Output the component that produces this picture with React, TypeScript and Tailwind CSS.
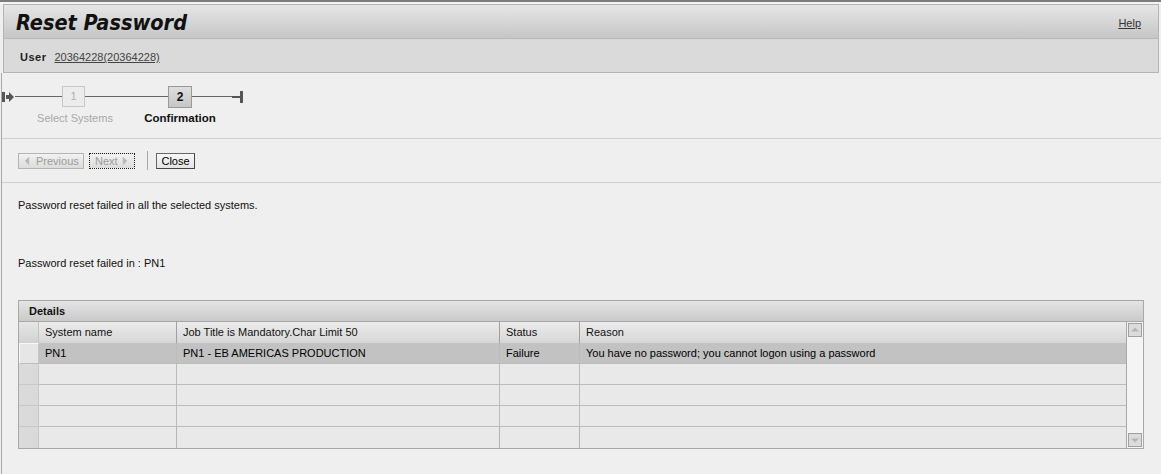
import React from "react";

const rows = [
  { system: "PN1", job: "PN1 - EB AMERICAS PRODUCTION", status: "Failure", reason: "You have no password; you cannot logon using a password", selected: true },
  { system: "", job: "", status: "", reason: "", selected: false },
  { system: "", job: "", status: "", reason: "", selected: false },
  { system: "", job: "", status: "", reason: "", selected: false },
  { system: "", job: "", status: "", reason: "", selected: false },
];

function StartIcon() {
  return (
    <svg width="13" height="12" viewBox="0 0 13 12">
      <rect x="0" y="1" width="3" height="10" fill="#555" />
      <path d="M4 4 H7 V1 L12 6 L7 11 V8 H4 Z" fill="#555" />
    </svg>
  );
}

function EndIcon() {
  return (
    <svg width="12" height="14" viewBox="0 0 12 14">
      <rect x="0" y="6" width="8" height="2" fill="#555" />
      <rect x="8" y="1" width="3" height="12" fill="#555" />
    </svg>
  );
}

function Tri({ dir }: { dir: "left" | "right" | "up" | "down" }) {
  const d = {
    left: "M6 1 L2 5 L6 9 Z",
    right: "M2 1 L6 5 L2 9 Z",
    up: "M1 6.5 L5 2.5 L9 6.5 Z",
    down: "M1 3.5 L5 7.5 L9 3.5 Z",
  }[dir];
  return (
    <svg width="10" height="10" viewBox="0 0 10 10">
      <path d={d} fill="#b4b4b4" stroke="#c8c8c8" strokeWidth="0.5" />
    </svg>
  );
}

export default function App() {
  return (
    <div className="w-[1161px] h-[474px] overflow-hidden bg-[#efefef] text-[11px] text-black font-['Liberation_Sans',Arial,sans-serif]">
      {/* top frame line */}
      <div className="h-[2px] bg-[#7c7c7c]" />
      <div className="h-[2px] bg-[#f4f4f4]" />

      {/* header */}
      <div className="ml-[3px] mr-[2px] border border-[#b4b4b4]">
        <div className="h-[34px] flex items-center justify-between pl-[12px] pr-[17px] bg-gradient-to-b from-[#e6e6e6] to-[#c6c6c6] border-b border-[#b8b8b8]">
          <h1 className="text-[21.5px] leading-none font-bold italic text-[#111] font-['DejaVu_Sans_Condensed','DejaVu_Sans',sans-serif] [font-stretch:condensed] mt-[2px]">
            Reset Password
          </h1>
          <a className="underline text-[#333] text-[11px] mt-[3px]">Help</a>
        </div>
        <div className="h-[33px] flex items-center pl-[16px] pt-[4px] bg-[#dadada]">
          <span className="font-bold text-[11px] tracking-[0.5px] text-[#222]">User</span>
          <a className="ml-[8px] underline text-[#444]">20364228(20364228)</a>
        </div>
      </div>

      {/* content */}
      <div className="ml-[1px] border-l border-[#a8a8a8] h-full">
        {/* stepper */}
        <div className="h-[65px] pt-[13px]">
          <div className="flex items-center h-[21px]">
            <StartIcon />
            <div className="w-[47px] h-px bg-[#666]" />
            <div className="w-[23px] h-[21px] flex items-center justify-center border border-[#c8c8c8] bg-[#ececec] text-[#b0b0b0] text-[11px]">
              1
            </div>
            <div className="w-[83px] h-px bg-[#666]" />
            <div className="w-[24px] h-[22px] flex items-center justify-center border border-[#999] bg-gradient-to-b from-[#dedede] to-[#c6c6c6] font-bold text-[12px] text-[#111]">
              2
            </div>
            <div className="w-[40px] h-px bg-[#666]" />
            <EndIcon />
          </div>
          <div className="flex mt-[4px] leading-[14px]">
            <div className="w-[100px] ml-[23px] text-center text-[#a8a8a8] text-[11px]">Select Systems</div>
            <div className="w-[100px] ml-[5px] text-center font-bold text-[11.5px] text-[#111]">Confirmation</div>
          </div>
        </div>

        {/* toolbar */}
        <div className="h-[45px] border-t border-b border-[#cfcfcf] flex items-start pt-[14px] pl-[16px]">
          <div className="h-[16px] w-[66px] flex items-center gap-[3px] pl-[4px] border border-[#b4b4b4] bg-gradient-to-b from-[#f2f2f2] to-[#dcdcdc] text-[#9c9c9c]">
            <Tri dir="left" />
            <span>Previous</span>
          </div>
          <div className="ml-[5px] h-[16px] w-[46px] flex items-center gap-[3px] pl-[5px] border border-dotted border-[#222] bg-gradient-to-b from-[#f2f2f2] to-[#dcdcdc] text-[#9c9c9c]">
            <span>Next</span>
            <Tri dir="right" />
          </div>
          <div className="ml-[12px] -mt-[2px] w-px h-[19px] bg-[#a8a8a8]" />
          <div className="ml-[8px] h-[16px] w-[39px] flex items-center justify-center border border-[#666] border-b-[#444] border-r-[#444] bg-gradient-to-b from-[#f8f8f8] to-[#e4e4e4] text-black">
            Close
          </div>
        </div>

        {/* messages */}
        <div className="pl-[16px] pt-[16px] text-[#111] leading-[13px]">
          <p>Password reset failed in all the selected systems.</p>
          <p className="mt-[45px]">Password reset failed in : PN1</p>
        </div>

        {/* details table */}
        <div className="ml-[16px] mt-[30px] w-[1126px] border border-[#a8a8a8]">
          <div className="h-[21px] flex items-center pl-[10px] font-bold text-[#111] bg-gradient-to-b from-[#e4e4e4] to-[#cacaca] border-b border-[#a8a8a8]">
            Details
          </div>
          <div className="flex">
            <div className="grid grid-cols-[20px_138px_323px_80px_546px]">
              {/* header row */}
              <div className="h-[21px] bg-gradient-to-b from-[#e6e6e6] to-[#d2d2d2] border-r border-[#c4c4c4]" />
              {["System name", "Job Title is Mandatory.Char Limit 50", "Status", "Reason"].map((h, i) => (
                <div
                  key={h}
                  className={
                    "h-[21px] flex items-center pl-[6px] text-[#111] bg-gradient-to-b from-[#ececec] to-[#d6d6d6] " +
                    (i < 3 ? "border-r border-[#a0a0a0]" : "")
                  }
                >
                  {h}
                </div>
              ))}

              {rows.map((r, idx) => {
                const bg = r.selected ? "bg-[#c2c2c2]" : "bg-[#e9e9e9]";
                const line = idx < rows.length - 1 ? "border-b border-[#bcbcbc]" : "";
                return (
                  <React.Fragment key={idx}>
                    <div className={"h-[21px] " + (r.selected ? "bg-[#e6e6e6] border border-[#f8f8f8] border-b-[#bcbcbc] border-r-[#c8c8c8]" : "bg-[#dadada] border-r border-[#c8c8c8] " + line)} />
                    <div className={"h-[21px] flex items-center pl-[6px] border-r border-[#b4b4b4] " + bg + " " + line}>{r.system}</div>
                    <div className={"h-[21px] flex items-center pl-[6px] border-r border-[#b4b4b4] " + bg + " " + line}>{r.job}</div>
                    <div className={"h-[21px] flex items-center pl-[6px] border-r border-[#b4b4b4] " + bg + " " + line}>{r.status}</div>
                    <div className={"h-[21px] flex items-center pl-[6px] " + bg + " " + line}>{r.reason}</div>
                  </React.Fragment>
                );
              })}
            </div>

            {/* scrollbar */}
            <div className="w-[17px] flex flex-col justify-between items-center py-[1px] bg-[#f4f4f4] border-l border-[#a8a8a8]">
              <div className="w-[14px] h-[14px] flex items-center justify-center bg-[#dcdcdc] border border-[#a0a0a0]">
                <Tri dir="up" />
              </div>
              <div className="w-[14px] h-[14px] flex items-center justify-center bg-[#dcdcdc] border border-[#a0a0a0]">
                <Tri dir="down" />
              </div>
            </div>
          </div>
        </div>
      </div>
    </div>
  );
}
